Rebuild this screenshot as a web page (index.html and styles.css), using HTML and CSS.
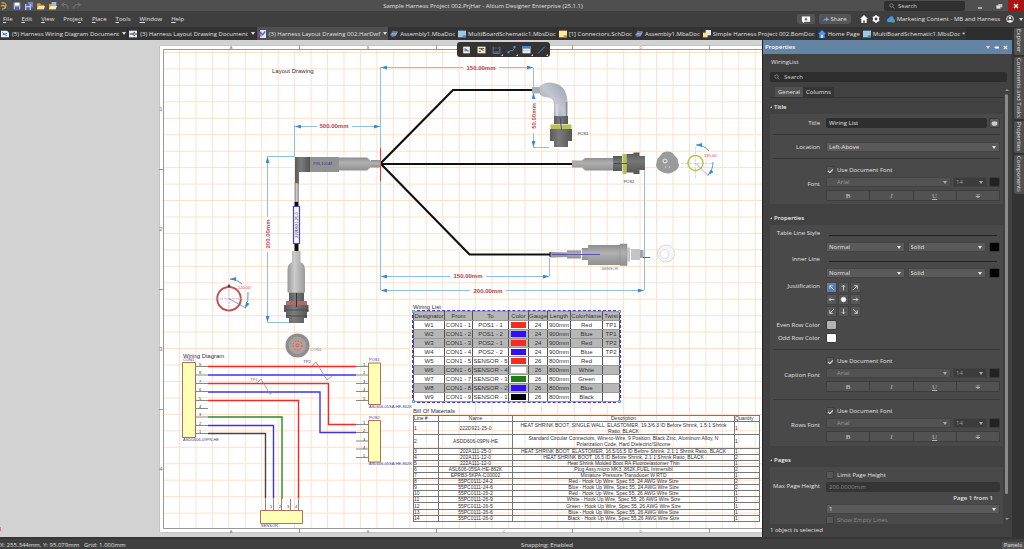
FILE: index.html
```html
<!DOCTYPE html>
<html lang="en">
<head>
<meta charset="utf-8">
<title>Sample Harness Project 002.PrjHar - Altium Designer Enterprise (25.1.1)</title>
<link rel="stylesheet" href="styles.css">
</head>
<body>
<div class="app">
  <header class="titlebar">
    <div class="quick">
      <svg class="ico" viewBox="0 0 12 12"><path d="M2 1q7 0 7 4.500t-6 5M1 6q5-2 6 1" fill="none" stroke="#c9a45a" stroke-width="2"/></svg>
      <svg class="ico" viewBox="0 0 12 12"><path d="M1 1h10v10H1z" fill="#a9b4e6"/><path d="M3 1h6v4H3z" fill="#fff"/><path d="M3 7h6v4H3z" fill="#5a67ae"/></svg>
      <svg class="ico" viewBox="0 0 12 12"><path d="M4 0h8v8H4z" fill="#7a86c8"/><path d="M0 3h9v9H0z" fill="#b9c2f0"/><path d="M2 3h5v3H2zM2 8h5v4H2z" fill="#56639f"/></svg>
      <svg class="ico" viewBox="0 0 12 12"><path d="M0 2h5l1 2h5v7H0z" fill="#c99b45"/><path d="M2 6h10l-2 5H0z" fill="#ffe29a"/></svg>
      <svg class="ico" viewBox="0 0 12 12"><path d="M4 0h7v6H4z" fill="#8fc3ef"/><path d="M0 3h4l1 2h5v6H0z" fill="#d4a64e"/><path d="M2 6h10l-2 5H0z" fill="#ffeab5"/></svg>
      <svg class="ico" viewBox="0 0 12 12"><path d="M5 1L1 4l4 3M1 4h6q4 0 4 6" fill="none" stroke="#777" stroke-width="1.500"/></svg>
      <svg class="ico" viewBox="0 0 12 12"><path d="M7 1l4 3-4 3M11 4H5q-4 0-4 6" fill="none" stroke="#777" stroke-width="1.500"/></svg>
    </div>
    <h1 class="title">Sample Harness Project 002.PrjHar - Altium Designer Enterprise (25.1.1)</h1>
    <div class="window">
      <label class="topsearch"><svg class="lens" viewBox="0 0 12 12"><circle cx="5" cy="5" r="3.500"/><path d="M8 8l3 3"/></svg><input type="text" placeholder="Search" aria-label="Search"></label>
      <button class="winbtn" aria-label="Minimize"><svg viewBox="0 0 12 12"><path d="M3 9h6" stroke="#ddd" stroke-width="2"/></svg></button>
      <button class="winbtn" aria-label="Restore"><svg viewBox="0 0 12 12"><path d="M5 3h6v5H5z" fill="#bbb"/><path d="M2 5h6v5H2z" fill="#ddd"/></svg></button>
      <button class="winbtn close" aria-label="Close"><svg viewBox="0 0 12 12"><path d="M3 3l6 6M9 3l-6 6" stroke="#fff" stroke-width="2"/></svg></button>
    </div>
  </header>

  <div class="menubar">
    <nav class="menus">
      <a href="#"><u>F</u>ile</a><a href="#"><u>E</u>dit</a><a href="#"><u>V</u>iew</a><a href="#">Proje<u>c</u>t</a><a href="#"><u>P</u>lace</a><a href="#"><u>T</u>ools</a><a href="#"><u>W</u>indow</a><a href="#"><u>H</u>elp</a>
    </nav>
    <div class="account">
      <button class="chip" aria-label="Add comment"><svg viewBox="0 0 16 12"><path d="M1 1h14v9H6l-3 2v-2H1z" fill="#fff"/><path d="M8 3v5M5.500 5.500h5" stroke="#444" stroke-width="1.500"/></svg></button>
      <button class="chip share"><svg viewBox="0 0 12 12"><path d="M0 9q1-5 6-5V1l6 5-6 4V7Q3 7 0 9z" fill="#6aa5e8"/></svg>Share</button>
      <svg class="ico" viewBox="0 0 12 12"><path d="M6 0L0 6h2v6h3V8h2v4h3V6h2z" fill="#fff"/></svg>
      <svg class="ico" viewBox="0 0 12 12"><circle cx="6" cy="6" r="3.400" fill="none" stroke="#fff" stroke-width="2.600"/><path d="M6 0v2M6 10v2M1 3l2 1M9 8l2 1M1 9l2-1M9 4l2-1" stroke="#fff" stroke-width="2"/></svg>
      <a class="workspace" href="#"><svg class="ico" viewBox="0 0 12 12"><path d="M0 8q0-3 3-3 1-4 5-3 2 1 2 4 2 1 2 3 0 2-2 2H3Q0 11 0 8z" fill="#4b95f0"/><circle cx="9" cy="9" r="2.500" fill="#4caf50"/></svg>Marketing Content - MB and Harness</a>
      <svg class="ico user" viewBox="0 0 12 12"><circle cx="6" cy="6" r="5" fill="none" stroke="#ddd" stroke-width="1.500"/><circle cx="6" cy="4.500" r="2" fill="#eee"/><path d="M2 9.500q4-4 8 0-4 3-8 0z" fill="#eee"/></svg>
      <i class="caret"></i>
    </div>
  </div>

  <div class="workarea">
    <div class="left">
      <nav class="doctabs">
        <a href="#" class="drop"><svg class="ico" viewBox="0 0 12 12"><path d="M0 1h9l3 3v7H0z" fill="#e8eefb"/><path d="M2 4l7 5M3 7l6-2" stroke="#3c6cc0" stroke-width="1.500"/></svg>(5) Harness Wiring Diagram Document<i class="caret"></i></a>
        <a href="#" class="drop"><svg class="ico" viewBox="0 0 12 12"><path d="M0 1h12v10H0z" fill="#e8eefb"/><path d="M1 6h4l4-3M5 6l4 3M8 6h4" stroke="#333" fill="none" stroke-width="1.500"/></svg>(3) Harness Layout Drawing Document<i class="caret"></i></a>
        <a href="#" class="drop on"><svg class="ico" viewBox="0 0 12 12"><path d="M3 0h9v12H3z" fill="#dfe6fa"/><path d="M0 10l4-6 3 3 4-5" fill="none" stroke="#4464c8" stroke-width="2"/><path d="M1 4l4 6" stroke="#d05080" stroke-width="2"/></svg>(3) Harness Layout Drawing 002.HarDwf<i class="caret"></i></a>
        <a href="#"><svg class="ico" viewBox="0 0 12 12"><path d="M0 7l4-6 8 1-3 7-6 2z" fill="#5f7599"/><path d="M2 7l6 1 3-5M3 5l6 1" stroke="#b5c7e4" fill="none"/></svg>Assembly1.MbaDoc</a>
        <a href="#"><svg class="ico" viewBox="0 0 12 12"><path d="M0 1h12v10H0z" fill="#9cc8e6"/><path d="M7 8h5v3H7z" fill="#5e8bb0"/></svg>MultiBoardSchematic1.MbsDoc</a>
        <a href="#"><svg class="ico" viewBox="0 0 12 12"><path d="M0 1h12v10H0z" fill="#ffe89a"/><path d="M7 8h5v3H7z" fill="#c29a40"/></svg>[1] Connectors.SchDoc</a>
        <a href="#"><svg class="ico" viewBox="0 0 12 12"><path d="M0 7l4-6 8 1-3 7-6 2z" fill="#5f7599"/><path d="M2 7l6 1 3-5M3 5l6 1" stroke="#b5c7e4" fill="none"/></svg>Assembly1.MbaDoc</a>
        <a href="#"><svg class="ico" viewBox="0 0 12 12"><path d="M4 0h8v8H4z" fill="#e8e8e8"/><path d="M0 4h7v7H0z" fill="#ffe08a"/></svg>Simple Harness Project 002.BomDoc</a>
        <a href="#"><svg class="ico" viewBox="0 0 12 12"><path d="M6 0L0 6h2v6h8V6h2z" fill="#4d97f5"/><path d="M5 7h2v5H5z" fill="#fff"/></svg>Home Page</a>
        <a href="#"><svg class="ico" viewBox="0 0 12 12"><path d="M0 1h12v10H0z" fill="#9cc8e6"/><path d="M7 8h5v3H7z" fill="#5e8bb0"/></svg>MultiBoardSchematic1.MbsDoc *</a>
      </nav>

      <div class="split">
        <main class="canvas">
          <svg class="drawing" width="1200" height="497" viewBox="0 40 1200 497" role="img" aria-label="Harness layout drawing">
            <defs>
              <pattern id="grid" x="179" y="52" width="16.450" height="16.450" patternUnits="userSpaceOnUse"><path d="M.5 0v17M0 .5h17" stroke="#fde0ca" fill="none"/></pattern>
              <marker id="arr" viewBox="0 0 6 4" refX="6" refY="2" markerWidth="6" markerHeight="4" orient="auto-start-reverse" markerUnits="userSpaceOnUse"><path d="M0 0l6 2-6 2z" fill="#3d8ac8"/></marker>
              <linearGradient id="gv" x1="0" y1="0" x2="0" y2="1"><stop offset="0" stop-color="#8e8e8e"/><stop offset=".4" stop-color="#b0b0b0"/><stop offset="1" stop-color="#909090"/></linearGradient>
              <linearGradient id="gh" x1="0" y1="0" x2="1" y2="0"><stop offset="0" stop-color="#979797"/><stop offset=".4" stop-color="#cccccc"/><stop offset="1" stop-color="#9a9a9a"/></linearGradient>
              <linearGradient id="dh" x1="0" y1="0" x2="1" y2="0"><stop offset="0" stop-color="#5a5a5a"/><stop offset=".4" stop-color="#7b7b7b"/><stop offset="1" stop-color="#555"/></linearGradient>
              <linearGradient id="dv" x1="0" y1="0" x2="0" y2="1"><stop offset="0" stop-color="#555"/><stop offset=".4" stop-color="#777"/><stop offset="1" stop-color="#555"/></linearGradient>
              <linearGradient id="elbow" x1="0" y1="1" x2="1" y2="0"><stop offset="0" stop-color="#9499a6"/><stop offset=".5" stop-color="#c3c7d2"/><stop offset="1" stop-color="#9a9fac"/></linearGradient>
            </defs>
            <path d="M159 45h1041v488H159z" fill="#fff"/>
            <path d="M163 49h1037v480H163z" fill="url(#grid)"/>
            <path d="M1200 45.500H159.500v487H1200" fill="none" stroke="#c4c4c4"/>
            <path d="M1200 49.500H163.500v479H1200M299.500 45v4M436.500 45v4M572.500 45v4M709.500 45v4M299.500 529v4M436.500 529v4M572.500 529v4M709.500 529v4M159 169.500h4M159 289.500h4M159 409.500h4" fill="none" stroke="#999"/>
            <g class="zone"><text x="231" y="49">A</text><text x="368" y="49">B</text><text x="504" y="49">C</text><text x="641" y="49">D</text><text x="231" y="533">A</text><text x="368" y="533">B</text><text x="504" y="533">C</text><text x="641" y="533">D</text></g>
            <g class="zone row"><text x="161" y="111">1</text><text x="161" y="231">2</text><text x="161" y="351">3</text><text x="161" y="471">4</text></g>

            <!-- dimensions -->
            <g class="dimline">
              <path d="M380.500 67v223M533.500 68v19M294.500 125v31M267 156.500h28M267 322.500h28M533 147.500h16M549.500 258v18M644.500 165v125"/>
              <g class="arrows">
                <path d="M463 67.500h-82"/><path d="M499 67.500h34"/><path d="M317 126.500h-22"/><path d="M352 126.500h28"/>
                <path d="M267.500 217v-60"/><path d="M267.500 252v70"/><path d="M533.500 133v14"/><path d="M533.500 99v-6"/>
                <path d="M450 276.500h-69"/><path d="M486 276.500h63"/><path d="M470 290.500h-89"/><path d="M506 290.500h138"/>
              </g>
            </g>
            <g class="dimtext">
              <text x="481" y="70">150.00mm</text><text x="334" y="128">500.00mm</text><text x="468" y="278">150.00mm</text><text x="488" y="293">200.00mm</text>
              <text transform="translate(270 234) rotate(-90)">200.00mm</text><text transform="translate(536 116) rotate(-90)">50.00mm</text>
            </g>

            <!-- cable branches -->
            <path d="M533 90h-80l-72.500 73.500 89 91H551M380.500 164H573" fill="none" stroke="#111" stroke-width="2.200"/>
            <path d="M380.500 148v33" stroke="#e33" fill="none"/>

            <!-- left right-angle boot -->
            <path d="M371 160h9.500v7.500H371z" fill="url(#gv)"/>
            <path d="M339 157.500h28l4 3.500v6l-4 3.500h-28z" fill="url(#gv)"/>
            <path d="M310 157h29v15h-29z" fill="#929292"/>
            <path d="M295 157h15v15h-11v12h-4z" fill="url(#dh)"/>
            <path d="M295 183h3.500v19H295z" fill="url(#gh)" stroke="#777" stroke-width=".5"/>
            <path d="M294.500 202h4v50h-4z" fill="#111"/>
            <path d="M293.500 206.500h6v37h-6z" fill="#f6f6ff" stroke="#4a40c8" stroke-width="1.200"/>
            <text class="tiny dark" transform="translate(298 225) rotate(-90)">222D921-25-0</text>
            <text class="tiny navy" x="323" y="165">P/N-101AT</text>
            <path d="M292 251h8.500v11q4.500 2 4.500 8v22.500h-17.500V270q0-6 4.500-8z" fill="url(#gh)"/>
            <path d="M289 292.500h15v9h-15z" fill="url(#dh)"/><path d="M286 301h21v4h-21z" fill="#b4686a"/>
            <path d="M284 305h24.500v7H307v6h-3v5h-15v-5h-3v-6h-2z" fill="url(#dh)"/><path d="M284 310h24.500M286 316h21" stroke="#3c3c3c" stroke-width=".7"/>
            <path d="M296.500 293v14" stroke="#222" stroke-width=".8"/>
            <circle cx="297.500" cy="345.500" r="12" fill="#8d8d8d"/><circle cx="297.500" cy="345.500" r="9" fill="#a2a2a2"/><circle cx="297.500" cy="345.500" r="6.500" fill="#c59a92"/>
            <circle cx="297.500" cy="345.500" r="4.500" fill="none" stroke="#a06c66" stroke-dasharray="1.500 1.500"/><circle cx="297.500" cy="345.500" r="1.500" fill="none" stroke="#a06c66" stroke-width=".8"/>
            <text class="tiny" x="316" y="351">CON1</text>

            <circle cx="229" cy="298.700" r="11.800" fill="none" stroke="#c4505a" stroke-width="2"/>
            <path d="M216 298.700h26M229 285v26" stroke="#b9a9d8" stroke-width=".6" stroke-dasharray="3 1"/>
            <path d="M229 298.700l17 9.500" stroke="#8062a8" stroke-width=".7"/><circle cx="229" cy="286" r="1.400" fill="#444"/>
            <path d="M242 284q-5-5-12-5" class="arc"/><path d="M248 292q1 9-3 16" class="arc"/>
            <text class="tiny red" x="245" y="289">120.00°</text>

            <!-- angled connector POS1 -->
            <path d="M532 87h9v6.500h-9z" fill="#a9adb8"/>
            <path d="M540 86q3-3 8-3.500 19 0 19.500 20v14H554v-12q0-6-6-7-5 0-8-3z" fill="url(#elbow)"/>
            <path d="M557 104v12" stroke="#d4d7e0" stroke-width="2.500"/><path d="M566.500 102v14" stroke="#858a98" stroke-width="1.500"/>
            <path d="M554 116h14v8h-14z" fill="url(#dh)"/><path d="M550.500 124.500h21v4.500h-21z" fill="#b9bf55"/>
            <path d="M550 129h22v12h-4v6h-14v-6h-4z" fill="url(#dh)"/>
            <path d="M560 117l1.500 13" stroke="#3a3aa8" stroke-width=".8"/>
            <text class="tiny dark" x="583" y="135">POS1</text>

            <!-- straight connector POS2 -->
            <path d="M572 160.500h10l3-2.500h28v12.500h-28l-3-3h-10z" fill="url(#gv)"/>
            <path d="M613 156h9v15h-9z" fill="url(#dv)"/><path d="M622.500 154h4v20h-4z" fill="#b9bf55"/>
            <path d="M626.500 154h7v-1.500h6V156h5.500v14h-5.500v4h-6v-1.500h-7z" fill="url(#dv)"/>
            <path d="M614 163.500h13" stroke="#3a3aa8" stroke-width=".9"/>
            <text class="tiny dark" x="629" y="183">POS2</text>
            <path d="M667.500 151.500q5 0 7 4l3 3 1.500 7q-1 4-5 6-6 4-13 0-4-2-5-6l1.500-7 3-3q2-4 7-4z" fill="#9a9a9a"/>
            <circle cx="665" cy="161" r="2" fill="none" stroke="#eee"/><path d="M665 167h1M669 167h1" stroke="#eee"/>
            <path d="M681 163.500h32M695.500 147v32" stroke="#c9c9ee" stroke-width=".7" stroke-dasharray="3 1"/>
            <circle cx="695.500" cy="163" r="7.500" fill="none" stroke="#bcc44c" stroke-width="1.500"/>
            <path d="M695.500 163l13 13" stroke="#9a80b8" stroke-width=".7"/>
            <path d="M709 151q-5-6-13-6" class="arc"/><path d="M713 162q0 8-5 13" class="arc"/>
            <text class="tiny red" x="711" y="157">135.00°</text>

            <!-- sensor -->
            <path d="M550 252h4l14 .5v4.500l-14 .5h-4z" fill="#999"/><path d="M567 250.500h14v8h-14z" fill="url(#gv)"/><path d="M582 248h6v12h-6z" fill="url(#gv)"/>
            <path d="M588 245h32v20h-32z" fill="url(#gv)"/><path d="M620 244h7v21.500h-7z" fill="url(#gv)" stroke="#888" stroke-width=".5"/>
            <path d="M627 247.500h3v14h-3zM631 249h9v11h-9z" fill="#c4c4c4"/><path d="M640 250h3.500v8H640z" fill="#a4a4a4"/><path d="M643 257.500h7" stroke="#666"/>
            <path d="M552 254.500h48" stroke="#4b4bb0" stroke-width=".9"/><path d="M550 252v5" stroke="#111"/>
            <text class="tiny" x="610" y="269.500">SENSOR</text>
            <circle cx="666" cy="253.500" r="8.500" fill="#f7f7f7" stroke="#d8d8d8"/><circle cx="664.500" cy="254" r="4.500" fill="#fff" stroke="#ddd"/>

            <!-- wiring diagram -->
            <g class="pins"><path d="M196 366.500h12M196 375h12M196 383.500h12M196 391.500h12M196 400.500h12M196 408.500h12M196 417h12M196 425.500h12M196 433.500h12M356 366.500h12M356 375h12M356 383.500h12M356 391.500h12M356 400.500h12M356 424.500h12M356 432.500h12M356 441h12M356 449h12M356 457.500h12M265.500 499v12M273.500 499v12M281.500 499v12M290.500 499v12M298.500 499v12"/></g>
            <g class="wires">
              <path class="r" d="M208 366.500h148M208 383.500h120.500v41H356M208 400.500h90.500v98"/>
              <path class="b" d="M208 375h148M208 392h112v40.500h36M208 425.500h65.500v73"/>
              <path class="g" d="M208 417h74v82"/><path class="k" d="M208 433.500h57.500v65"/>
            </g>
            <path class="box" d="M182.500 362.500h13v75h-13zM368.500 363h12v41.500h-12zM368.500 420.500h12v41.500h-12zM260.500 510.500h42v13h-42z"/>
            <path d="M257 383l4-4 9 15 3-2M312 366l4-4 11 18 5-4" fill="none" stroke="#889" stroke-width=".8"/>
            <text class="tiny" x="254" y="381">TP1</text><text class="tiny navy" x="307" y="363">TP2</text>
            <g class="tiny dark"><text x="200" y="366">9</text><text x="200" y="374">8</text><text x="200" y="383">7</text><text x="200" y="391">6</text><text x="200" y="400">5</text><text x="200" y="408">4</text><text x="200" y="416">3</text><text x="200" y="425">2</text><text x="200" y="433">1</text><text x="364" y="366">1</text><text x="364" y="374">2</text><text x="364" y="383">3</text><text x="364" y="391">4</text><text x="364" y="400">5</text><text x="364" y="424">1</text><text x="364" y="432">2</text><text x="364" y="441">3</text><text x="364" y="449">4</text><text x="364" y="457">5</text><text x="271" y="508">1</text><text x="280" y="508">2</text><text x="288" y="508">3</text><text x="296" y="508">4</text></g>
            <g class="tiny navy start"><text x="183" y="361">CON1</text><text x="183" y="441">ASDD606-09PN-HE</text><text x="369" y="361">POS1</text><text x="369" y="408">ASL606-05SA-HE-862K</text><text x="369" y="419">POS2</text><text x="369" y="465">ASL606-05SA-HE-862K</text><text x="261" y="527">SENSOR</text></g>
            <text class="cap" x="272" y="73">Layout Drawing</text><text class="cap" x="183" y="358">Wiring Diagram</text>
            <path d="M0 527v4" stroke="#c33"/>
          </svg>

          <figure class="wiringlist">
            <figcaption>Wiring List</figcaption>
            <table>
              <colgroup><col class="c31"><col class="c28"><col class="c36"><col class="c20"><col class="c19"><col class="c23"><col class="c32"><col class="c17"></colgroup>
              <thead><tr><th>Designator</th><th>From</th><th>To</th><th>Color</th><th>Gauge</th><th>Length</th><th>ColorName</th><th>Twist</th></tr></thead>
              <tbody>
                <tr><td>W1</td><td>CON1 - 1</td><td>POS1 - 1</td><td class="sw red"></td><td>24</td><td>900mm</td><td>Red</td><td>TP1</td></tr>
                <tr class="even"><td>W2</td><td>CON1 - 2</td><td>POS1 - 2</td><td class="sw blue"></td><td>24</td><td>900mm</td><td>Blue</td><td>TP1</td></tr>
                <tr class="even"><td>W3</td><td>CON1 - 3</td><td>POS2 - 1</td><td class="sw red"></td><td>24</td><td>900mm</td><td>Red</td><td>TP2</td></tr>
                <tr><td>W4</td><td>CON1 - 4</td><td>POS2 - 2</td><td class="sw blue"></td><td>24</td><td>900mm</td><td>Blue</td><td>TP2</td></tr>
                <tr><td>W5</td><td>CON1 - 5</td><td>SENSOR - 5</td><td class="sw red"></td><td>26</td><td>800mm</td><td>Red</td><td></td></tr>
                <tr class="even"><td>W6</td><td>CON1 - 6</td><td>SENSOR - 4</td><td class="sw white"></td><td>26</td><td>800mm</td><td>White</td><td></td></tr>
                <tr><td>W7</td><td>CON1 - 7</td><td>SENSOR - 3</td><td class="sw green"></td><td>26</td><td>800mm</td><td>Green</td><td></td></tr>
                <tr class="even"><td>W8</td><td>CON1 - 8</td><td>SENSOR - 2</td><td class="sw blue"></td><td>26</td><td>800mm</td><td>Blue</td><td></td></tr>
                <tr><td>W9</td><td>CON1 - 9</td><td>SENSOR - 1</td><td class="sw black"></td><td>26</td><td>800mm</td><td>Black</td><td></td></tr>
              </tbody>
            </table>
            <i class="grip tl"></i><i class="grip tr"></i><i class="grip bl"></i><i class="grip br"></i>
          </figure>

          <figure class="bom">
            <figcaption>Bill Of Materials</figcaption>
            <table>
              <colgroup><col class="c25"><col class="c74"><col class="c222"><col class="c25"></colgroup>
              <thead><tr><th>Line #</th><th class="mid">Name</th><th class="mid">Description</th><th>Quantity</th></tr></thead>
              <tbody>
                <tr class="tall"><td>1</td><td>222D921-25-0</td><td>HEAT SHRINK BOOT, SINGLE WALL, ELASTOMER, 19.3/6.3 ID Before Shrink, 1.5:1 Shrink<br>Ratio, BLACK</td><td>1</td></tr>
                <tr class="tall"><td>2</td><td>ASDD606-09PN-HE</td><td>Standard Circular Connectors, Wire-to-Wire, 9 Position, Black Zinc, Aluminum Alloy, N<br>Polarization Code, Hard Dielectric/Silicone</td><td>1</td></tr>
                <tr><td>3</td><td>202A111-25-0</td><td>HEAT SHRINK BOOT, ELASTOMER, 16.5/16.5 ID Before Shrink, 2.1:1 Shrink Ratio, BLACK</td><td>1</td></tr>
                <tr><td>4</td><td>202A111-12-0</td><td>HEAT SHRINK BOOT, 16.5 ID Before Shrink, 2.1:1 Shrink Ratio, BLACK</td><td>2</td></tr>
                <tr><td>5</td><td>222A111-12-0</td><td>Heat Shrink Molded Boot RA Fluoroelastomer Thin</td><td>1</td></tr>
                <tr><td>6</td><td>ASL606-05SA-HE-862K</td><td>Plug Assy.micro MK3, 862K,FUEL Immersibl</td><td>2</td></tr>
                <tr><td>7</td><td>EPRB3-5KPA-C00002</td><td>Miniature Pressure Transducer W RTD</td><td>1</td></tr>
                <tr><td>8</td><td>55PC0111-24-2</td><td>Red - Hook Up Wire, Spec 55, 24 AWG Wire Size</td><td>2</td></tr>
                <tr><td>9</td><td>55PC0111-24-6</td><td>Blue - Hook Up Wire, Spec 55, 24 AWG Wire Size</td><td>2</td></tr>
                <tr><td>10</td><td>55PC0111-26-2</td><td>Red - Hook Up Wire, Spec 55, 26 AWG Wire Size</td><td>1</td></tr>
                <tr><td>11</td><td>55PC0111-26-9</td><td>White - Hook Up Wire, Spec 55, 26 AWG Wire Size</td><td>1</td></tr>
                <tr><td>12</td><td>55PC0111-26-5</td><td>Green - Hook Up Wire, Spec 55, 26 AWG Wire Size</td><td>1</td></tr>
                <tr><td>13</td><td>55PC0111-26-6</td><td>Blue - Hook Up Wire, Spec 55, 26 AWG Wire Size</td><td>1</td></tr>
                <tr><td>14</td><td>55PC0111-26-0</td><td>Black - Hook Up Wire, Spec 55,26 AWG Wire Size</td><td>1</td></tr>
              </tbody>
            </table>
          </figure>

          <div class="activebar">
            <button aria-label="Place view"><svg viewBox="0 0 12 12"><path d="M1 1h10v10H1z" fill="#f5efd8"/><path d="M3 4l6 4M3 7h3" stroke="#4a7fd0" stroke-width="2"/></svg></button>
            <button aria-label="Place connection"><svg viewBox="0 0 12 12"><path d="M0 1h12v10H0z" fill="#f3e9c4"/><path d="M2 4h3l4 3M5 4h5M2 8h3" stroke="#444" fill="none" stroke-width="1.500"/></svg></button>
            <button class="more" aria-label="Place dimension"><svg viewBox="0 0 12 12"><path d="M1 1v10h10V1M3 9h6" stroke="#5f7da8" fill="none" stroke-width="1.500"/><path d="M2 3h8" stroke="#c9a25a" stroke-dasharray="1 1"/></svg></button>
            <button class="more" aria-label="Place note"><svg viewBox="0 0 12 12"><path d="M1 10l3-3h4l3-5" stroke="#5b93d8" fill="none" stroke-width="1.500"/><path d="M0 8h3v3H0zM9 0h3v3H9z" fill="#5b93d8"/></svg></button>
            <button class="more" aria-label="Place table"><svg viewBox="0 0 12 12"><path d="M0 0h12v11H0z" fill="#eee"/><path d="M0 0h12v4H0z" fill="#3f86e0"/><path d="M1 7h10" stroke="#999" stroke-dasharray="2 1"/></svg></button>
            <button class="more" aria-label="Place line"><svg viewBox="0 0 12 12"><path d="M1 11L11 1" stroke="#4d8fdc" stroke-width="1.500"/></svg></button>
          </div>
        </main>

        <aside class="panel">
          <div class="panelhead"><h2>Properties</h2><i class="caret"></i><svg viewBox="0 0 12 12"><path d="M0 6h4M4 3v6M4 4h7v4H4z" stroke="#fff" fill="#fff"/></svg><svg viewBox="0 0 12 12"><path d="M2 2l8 8M10 2l-8 8" stroke="#fff" stroke-width="2.500"/></svg></div>
          <div class="object">WiringList</div>
          <label class="search"><svg class="lens" viewBox="0 0 12 12"><circle cx="5" cy="5" r="3.500"/><path d="M8 8l3 3"/></svg><input type="text" placeholder="Search" aria-label="Search properties"></label>
          <div class="scrollwrap">
            <div class="scroller">
              <div class="tabs"><button class="on">General</button><button>Columns</button></div>
              <h3>Title</h3>
              <section class="sect">
                <div class="row"><label for="ttl">Title</label><div class="line"><input id="ttl" class="field grow" type="text" value="Wiring List"><button class="eye" aria-label="Toggle visibility"><svg viewBox="0 0 12 12"><ellipse cx="6" cy="6" rx="5" ry="4" fill="#ccc"/></svg></button></div></div>
                <hr>
                <div class="row"><label for="loc">Location</label><span class="sel"><select id="loc"><option>Left-Above</option></select></span></div>
                <hr>
                <div class="row"><span class="lbl">Font</span><div class="fontset">
                  <label class="check"><input type="checkbox" checked>Use Document Font</label>
                  <div class="line"><span class="sel dim grow tt"><select disabled aria-label="Font"><option>Arial</option></select></span><span class="sel dim size"><select disabled aria-label="Size"><option>14</option></select></span><button class="swatch dk" aria-label="Font color"></button></div>
                  <div class="btns"><button><b>B</b></button><button><i>I</i></button><button><u>U</u></button><button><s>T</s></button></div></div></div>
              </section>
              <h3>Properties</h3>
              <section class="sect">
                <div class="row top"><span class="lbl">Table Line Style</span><div class="stylebox"><div class="sample"></div><div class="line"><span class="sel grow"><select aria-label="Table line width"><option>Normal</option></select></span><span class="sel grow"><select aria-label="Table line style"><option>Solid</option></select></span><button class="swatch bk" aria-label="Line color"></button></div></div></div>
                <div class="row top"><span class="lbl">Inner Line</span><div class="stylebox"><div class="sample"></div><div class="line"><span class="sel grow"><select aria-label="Inner line width"><option>Normal</option></select></span><span class="sel grow"><select aria-label="Inner line style"><option>Solid</option></select></span><button class="swatch bk" aria-label="Inner line color"></button></div></div></div>
                <div class="row top just"><span class="lbl">Justification</span><div class="grid9">
                  <button class="on" aria-label="Top left"><svg viewBox="0 0 12 12"><path d="M10 10L3 3M3 8V3h5"/></svg></button><button aria-label="Top"><svg viewBox="0 0 12 12"><path d="M6 11V2M3 5l3-3 3 3"/></svg></button><button aria-label="Top right"><svg viewBox="0 0 12 12"><path d="M2 10l7-7M4 3h5v5"/></svg></button>
                  <button aria-label="Left"><svg viewBox="0 0 12 12"><path d="M11 6H2M5 3L2 6l3 3"/></svg></button><button aria-label="Center"><svg viewBox="0 0 12 12"><circle cx="6" cy="6" r="4" fill="#fff"/></svg></button><button aria-label="Right"><svg viewBox="0 0 12 12"><path d="M1 6h9M7 3l3 3-3 3"/></svg></button>
                  <button aria-label="Bottom left"><svg viewBox="0 0 12 12"><path d="M10 2L3 9M3 4v5h5"/></svg></button><button aria-label="Bottom"><svg viewBox="0 0 12 12"><path d="M6 1v9M3 7l3 3 3-3"/></svg></button><button aria-label="Bottom right"><svg viewBox="0 0 12 12"><path d="M2 2l7 7M9 4v5H4"/></svg></button></div></div>
                <div class="row tint"><span class="lbl">Even Row Color</span><button class="swatch gy" aria-label="Even row color"></button></div>
                <div class="row tint"><span class="lbl">Odd Row Color</span><button class="swatch wh" aria-label="Odd row color"></button></div>
                <hr>
                <div class="row low"><span class="lbl">Caption Font</span><div class="fontset">
                  <label class="check"><input type="checkbox" checked>Use Document Font</label>
                  <div class="line"><span class="sel dim grow tt"><select disabled aria-label="Caption font"><option>Arial</option></select></span><span class="sel dim size"><select disabled aria-label="Caption size"><option>14</option></select></span><button class="swatch dk" aria-label="Caption color"></button></div>
                  <div class="btns"><button><b>B</b></button><button><i>I</i></button><button><u>U</u></button><button><s>T</s></button></div></div></div>
                <hr>
                <div class="row low"><span class="lbl">Rows Font</span><div class="fontset">
                  <label class="check"><input type="checkbox" checked>Use Document Font</label>
                  <div class="line"><span class="sel dim grow tt"><select disabled aria-label="Rows font"><option>Arial</option></select></span><span class="sel dim size"><select disabled aria-label="Rows size"><option>14</option></select></span><button class="swatch dk" aria-label="Rows color"></button></div>
                  <div class="btns"><button><b>B</b></button><button><i>I</i></button><button><u>U</u></button><button><s>T</s></button></div></div></div>
              </section>
              <h3>Pages</h3>
              <section class="sect pages">
                <div class="row maxh"><label for="mph">Max Page Height</label><div class="limit"><label class="check"><input type="checkbox">Limit Page Height</label><input id="mph" class="field" type="text" value="200.0000mm" disabled></div></div>
                <div class="row"><span></span><div class="limit"><b class="pageno">Page 1 from 1</b><span class="sel"><select aria-label="Page"><option>1</option></select></span><label class="check off"><input type="checkbox" disabled>Show Empty Lines</label></div></div>
              </section>
            </div>
            <div class="scrollbar"><i class="up"></i><span class="thumb"></span><i class="down"></i></div>
          </div>
          <div class="selected">1 object is selected</div>
        </aside>
      </div>
    </div>
    <nav class="sidetabs"><a href="#">Explorer</a><a href="#">Comments and Tasks</a><a href="#">Properties</a><a href="#">Components</a></nav>
  </div>

  <footer class="status"><span class="coords">X: 255.344mm, Y: 95.079mm&nbsp;&nbsp; Grid: 1.000mm</span><span class="snap">Snapping: Enabled</span><button class="panels">Panels</button></footer>
</div>
</body>
</html>
```
FILE: styles.css
```css
* { box-sizing: border-box; }
body { margin: 0; background: #3f3f3f; color: #e0e0e0; font: 6px/8px "Open Sans", "Noto Sans", sans-serif; }
button, input, select { font: inherit; color: inherit; margin: 0; padding: 0; border: 0; background: none; min-width: 0; border-radius: 0; }
input { outline: 0; }
a { color: inherit; text-decoration: none; }
h1, h2, h3, figure { margin: 0; font-size: 6px; font-weight: 400; }
svg { display: block; }
.app { height: 100vh; display: flex; flex-direction: column; overflow: hidden; white-space: nowrap; }
.ico { width: 8px; height: 8px; flex: none; }
.caret { width: 0; height: 0; flex: none; border: 2px solid transparent; border-top: 3px solid #ddd; border-bottom: 0; }

.titlebar { height: 11px; flex: none; display: grid; grid-template-columns: 1fr auto 1fr; align-items: center; background: #4f4f4f; }
.quick { display: flex; gap: 4px; }
.quick .ico:first-child { margin-right: 1px; }
.title { padding-right: 58px; }
.window { display: flex; justify-content: flex-end; align-items: center; }
.topsearch { display: flex; align-items: center; gap: 3px; width: 81px; height: 10px; padding-left: 5px; margin-right: 5px; background: #303030; border-radius: 2px; }
.lens { width: 6px; height: 6px; flex: none; fill: none; stroke: #bbb; stroke-width: 1; }
input::placeholder { color: #d0d0d0; opacity: 1; }
.topsearch input, .search input { width: 60px; }
.winbtn { width: 19px; height: 11px; display: grid; place-items: center; }
.winbtn svg { width: 8px; height: 8px; }
.winbtn.close { width: 16px; background: #a51616; }

.menubar { height: 16px; flex: none; display: flex; justify-content: space-between; align-items: center; background: #3f3f3f; }
.menus { display: flex; gap: 9px; padding-left: 3px; }
.menus u { text-underline-offset: 1px; }
.account { display: flex; align-items: center; gap: 4px; }
.chip { height: 10px; padding: 0 4px; border-radius: 2px; background: #555; display: flex; align-items: center; gap: 2px; }
.chip svg { width: 10px; height: 7px; }
.chip.share svg { width: 6px; }
.share { margin-right: 5px; }
.workspace { display: flex; align-items: center; gap: 2px; margin: 0 2px 0 3px; }
.account .caret { margin: 0 1px; }

.workarea { flex: 1; min-height: 0; display: flex; }
.left { flex: 1; min-width: 0; display: flex; flex-direction: column; }
.doctabs { height: 13px; flex: none; display: flex; gap: 1px; background: #2d2d2d; }
.doctabs a { display: flex; align-items: center; gap: 2px; padding: 0 1px; background: #333; }
.doctabs .on { background: #505050; }
.doctabs .drop { gap: 3px; }
.split { flex: 1; min-height: 0; display: flex; }
.canvas { flex: 1; min-width: 0; position: relative; overflow: hidden; background: #d2d2d2; border-right: 1px solid #222; }

/* drawing sheet */
.zone { font: 4px "Liberation Sans", sans-serif; fill: #777; text-anchor: middle; }
.zone.row { font-size: 6px; }
.cap { font: 6px "Liberation Sans", sans-serif; fill: #333; }
.dimline { fill: none; stroke: #8fc0e4; }
.arrows path { marker-end: url(#arr); }
.dimtext { font: bold 6px "Liberation Sans", sans-serif; fill: #b8424a; text-anchor: middle; }
.tiny { font: 4px "Liberation Sans", sans-serif; fill: #777; text-anchor: middle; }
.tiny.dark { fill: #333; }
.tiny.navy { fill: #3a3a98; }
.tiny.red { fill: #c04040; }
.tiny.start { text-anchor: start; }
.arc { fill: none; stroke: #4a98d4; marker-end: url(#arr); }
.pins { stroke: #888; fill: none; }
.wires { fill: none; stroke-width: 1.4; }
.r { stroke: #f42a2a; }
.b { stroke: #3c32f0; }
.g { stroke: #2c8c20; }
.k { stroke: #444; }
.box { fill: #ffffb5; stroke: #b0705a; }

.wiringlist, .bom { position: absolute; left: 413px; color: #333; font: 6px/7px "Liberation Sans", sans-serif; }
.wiringlist { top: 264px; }
.bom { top: 368px; }
.wiringlist table, .bom table { border-collapse: collapse; table-layout: fixed; }
.wiringlist table { width: 207px; background: #fff; outline: 1px dashed #3a36d8; text-align: center; }
th { font-weight: 400; }
th, td { padding: 0; border: 1px solid #777; }
.wiringlist tr { height: 9px; background: #fff; }
.wiringlist thead tr, .wiringlist tr.even { background: #b7b7b7; }
.wiringlist td, .wiringlist th { border-color: #999 #555; }
.c17 { width: 17px; } .c19 { width: 19px; } .c20 { width: 20px; } .c23 { width: 23px; } .c25 { width: 25px; } .c28 { width: 28px; }
.c31 { width: 31px; } .c32 { width: 32px; } .c36 { width: 36px; } .c74 { width: 74px; } .c222 { width: 222px; }
.wiringlist .sw { padding: 0 2px; }
.sw::before { content: ""; display: block; height: 6px; }
.red::before { background: #fa2a1c; }
.blue::before { background: #3010fa; }
.white::before { background: #fff; }
.green::before { background: #1c8010; }
.black::before { background: #000; }
.grip { position: absolute; width: 3px; height: 3px; background: #a9cdf2; border: 1px solid #6da2dc; }
.tl { left: -1px; top: 6px; } .tr { right: -1px; top: 6px; } .bl { left: -1px; bottom: -1px; } .br { right: -1px; bottom: -1px; }
.bom table { width: 347px; height: 107px; font-size: 5px; line-height: 5px; text-align: left; }
.bom tr { height: 6px; }
.bom .tall { height: 12px; }
.bom tr.tall td { line-height: 6px; }
.bom td:nth-child(2), .bom td:nth-child(3), .bom .mid { text-align: center; }

.activebar { position: absolute; left: 457px; top: 2px; height: 15px; padding: 0 4px; display: flex; align-items: center; gap: 5px; background: #333; border-radius: 3px; }
.activebar button { width: 10px; height: 11px; display: grid; place-items: center; position: relative; }
.activebar svg { width: 9px; height: 8px; }
.more::after { content: ""; position: absolute; right: -2px; bottom: -1px; border: 1px solid #ddd; border-top-color: transparent; border-left-color: transparent; }

/* properties panel */
.panel { width: 249px; flex: none; display: flex; flex-direction: column; background: #414141; padding-bottom: 1px; }
.panelhead { height: 14px; flex: none; display: flex; align-items: center; gap: 4px; padding: 0 4px 0 2px; background: #6583a3; color: #fff; }
.panelhead h2 { flex: 1; font-weight: 600; }
.panelhead svg { width: 5px; height: 5px; }
.object { padding: 4px 8px 5px; }
.search { display: flex; align-items: center; gap: 4px; height: 10px; margin: 1px 5px 0 7px; padding-left: 4px; background: #2d2d2d; border-radius: 2px; flex: none; }
.scrollwrap { flex: 1; min-height: 0; display: flex; margin-top: 5px; }
.scroller { flex: 1; min-width: 0; overflow: hidden; padding: 0 1px 0 7px; }
.scrollbar { width: 5px; margin-right: 3px; display: flex; flex-direction: column; align-items: center; }
.up, .down { border: 2px solid transparent; height: 0; }
.up { border-bottom: 2px solid #999; margin-bottom: 3px; }
.down { border-top: 2px solid #999; margin: 24px 0 2px; }
.thumb { width: 3px; flex: 1; background: #8a8a8a; border-radius: 2px; }
.tabs { display: flex; height: 11px; padding-left: 5px; border-bottom: 1px solid #333; }
.tabs button { padding: 0 3px; background: #353535; }
.tabs .on { background: #515151; }
h3 { height: 16px; padding-top: 5px; font-weight: 600; color: #eee; }
h3::before { content: ""; display: inline-block; margin-right: 2px; border: 1px solid #ccc; border-top-color: transparent; border-left-color: transparent; vertical-align: 1px; }
.sect { background: #494949; padding: 4px 3px 3px; margin-bottom: 5px; }
.row { display: grid; grid-template-columns: 47px minmax(0, 1fr); column-gap: 6px; align-items: center; }
.row > label, .lbl { text-align: right; }
.row.top { align-items: start; }
.row.low { padding-bottom: 1px; }
.line { display: flex; align-items: center; gap: 2px; }
.grow { flex: 1; }
.field { height: 10px; padding: 0 3px; background: #2e2e2e; border-radius: 2px; width: 100%; }
.field:disabled { background: #353535; color: #888; }
.eye, .swatch { width: 11px; height: 10px; border: 1px solid #3a3a3a; border-radius: 2px; flex: none; }
.eye { background: #5a5a5a; display: grid; place-items: center; }
.eye svg { width: 7px; height: 7px; }
.dk { background: #222; } .bk { background: #000; } .gy { background: #b3b3b3; } .wh { background: #fff; }
hr { border: 0; height: 1px; margin: 6px 0 7px; background: #383838; }
.sel { display: block; position: relative; height: 10px; background: #5a5a5a; border: 1px solid #434343; border-radius: 1px; }
.sel select { appearance: none; display: block; width: 100%; height: 8px; line-height: 8px; padding: 0 2px; opacity: 1; }
.sel::after { content: ""; position: absolute; right: 3px; top: 3px; border: 2px solid transparent; border-top: 3px solid #e6e6e6; border-bottom: 0; }
.dim { background: #525252; color: #999; }
.dim::after { border-top-color: #aaa; }
.dim.size { width: 34px; background: #3c3c3c; }
.tt select { padding-left: 10px; }
.fontset { display: grid; gap: 3px; }
.check { display: flex; align-items: center; gap: 3px; height: 8px; }
.check input { appearance: none; width: 8px; height: 8px; background: #575757; border: 1px solid #3f3f3f; border-radius: 1px; display: grid; place-items: center; }
.check input:checked::before { content: ""; width: 4px; height: 2px; border: solid #ddd; border-width: 0 0 1px 1px; transform: rotate(-45deg); }
.off { color: #888; }
.btns { display: grid; grid-template-columns: repeat(4, 1fr); gap: 1px; height: 11px; background: #3d3d3d; border: 1px solid #3d3d3d; border-radius: 1px; }
.btns button { background: #525252; color: #b4b4b4; font-family: "Liberation Serif", serif; font-size: 7px; line-height: 8px; }
.stylebox { display: grid; gap: 6px; padding-bottom: 3px; }
.sample { height: 7px; border-bottom: 1px solid #222; margin: 0 3px; }
.stylebox .line { gap: 3px; }
.just { padding-top: 1px; }
.grid9 { display: grid; grid-template-columns: repeat(3, 11px); grid-auto-rows: 11px; gap: 1px; width: 37px; height: 36px; }
.grid9 button { background: #565656; border: 1px solid #444; display: grid; place-items: center; }
.grid9 .on { background: #5f80a6; }
.grid9 svg { width: 7px; height: 7px; fill: none; stroke: #ddd; stroke-width: 1.5; }
.tint { height: 13px; }
.tint + hr { margin-top: 5px; }
.pages { margin: 0; }
.limit { display: grid; gap: 2px; margin-bottom: 2px; }
.maxh .limit { gap: 3px; }
.maxh label[for] { padding-top: 6px; }
.pageno { justify-self: end; padding-right: 7px; font-weight: 600; }
.selected { padding: 2px 7px; flex: none; }

.sidetabs { width: 12px; flex: none; display: flex; flex-direction: column; gap: 2px; padding: 1px 0 0 2px; background: #333; }
.sidetabs a { writing-mode: vertical-rl; line-height: 10px; padding: 1px 0 2px; background: #505050; border-radius: 2px 0 0 2px; }
.status { height: 12px; flex: none; display: grid; grid-template-columns: 1fr auto 1fr; align-items: end; background: #3f3f3f; border-top: 2px solid #363636; }
.snap { padding-left: 70px; }
.panels { justify-self: end; height: 7px; line-height: 7px; padding: 0 2px; background: #555; }
```
